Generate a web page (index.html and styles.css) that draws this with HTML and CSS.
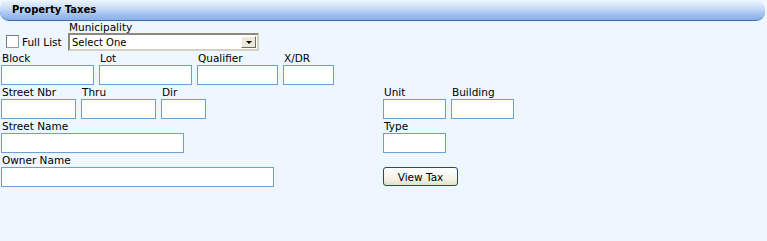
FILE: index.html
```html
<!DOCTYPE html>
<html lang="en">
<head>
  <meta charset="UTF-8" />
  <meta name="viewport" content="width=device-width, initial-scale=1.0">
  <title>Property Taxes</title>
  <link rel="stylesheet" href="styles.css">
</head>
<body>
  <div class="title-bar">Property Taxes</div>

  <form class="tax-form" onsubmit="return false;">
    <div class="row-top">
      <label class="full-list"><input type="checkbox" id="fullList" /> Full List</label>
      <div class="field">
        <span class="label label-short">Municipality</span>
        <div class="select-box">
          <select id="municipality">
            <option>Select One</option>
          </select>
          <span class="drop"><span class="arrow"></span></span>
        </div>
      </div>
    </div>

    <!-- block / lot -->
    <div class="fields">
      <div class="field"><span class="label">Block</span><input class="w93" id="block" /></div>
      <div class="field"><span class="label">Lot</span><input class="w93" id="lot" /></div>
      <div class="field"><span class="label">Qualifier</span><input class="w81" id="qualifier" /></div>
      <div class="field"><span class="label">X/DR</span><input class="w51" id="xdr" /></div>
    </div>
    <div></div>

    <!-- address -->
    <div class="fields">
      <div class="field"><span class="label">Street Nbr</span><input class="w75" id="streetNbr" /></div>
      <div class="field"><span class="label">Thru</span><input class="w75" id="thru" /></div>
      <div class="field"><span class="label">Dir</span><input class="w45" id="dir" /></div>
    </div>
    <div class="fields">
      <div class="field"><span class="label">Unit</span><input class="w63" id="unit" /></div>
      <div class="field"><span class="label">Building</span><input class="w63" id="building" /></div>
    </div>

    <div class="fields">
      <div class="field"><span class="label">Street Name</span><input class="w183" id="streetName" /></div>
    </div>
    <div class="fields">
      <div class="field"><span class="label">Type</span><input class="w63" id="type" /></div>
    </div>

    <div class="fields">
      <div class="field"><span class="label">Owner Name</span><input class="w273" id="ownerName" /></div>
    </div>
    <div class="fields">
      <button type="submit" class="view-tax">View Tax</button>
    </div>
  </form>
</body>
</html>
```

FILE: styles.css
```css
body {
  margin: 0;
  background-color: #eef6ff;
  color: #000;
  font-family: "DejaVu Sans", Verdana, sans-serif;
  font-size: 10.5px;
  height: 241px;
}
.title-bar {
  width: 753px;
  height: 20px;
  line-height: 20px;
  padding-left: 12px;
  font-size: 10px;
  font-weight: bold;
  border-bottom: 1px solid #3f6cab;
  border-radius: 9px;
  background: linear-gradient(#eef5fe, #c4daf7 45%, #9dbff0 75%, #8ab0e9);
}
.tax-form {
  display: grid;
  grid-template-columns: 382px auto;
  padding-left: 1px;
}
.row-top {
  grid-column: 1 / -1;
  display: flex;
  align-items: flex-end;
}
.full-list {
  width: 67px;
  display: flex;
  align-items: center;
  gap: 3px;
  margin-bottom: 3px;
}
.full-list input {
  appearance: none;
  width: 13px;
  height: 13px;
  margin: 0 0 0 5px;
  background-color: #fff;
  border: 1px solid #9a9a9a;
  border-top-color: #7a7a7a;
  border-left-color: #7a7a7a;
}
.fields {
  display: flex;
  gap: 5px;
}
.field {
  display: flex;
  flex-direction: column;
}
.label {
  line-height: 13px;
  padding: 1px 0 0 1px;
}
.label-short {
  line-height: 12px;
  padding-top: 0;
}
.field input {
  box-sizing: border-box;
  height: 20px;
  margin: 0;
  border: 1px solid #6d9fd5;
  background-color: #fff;
  font-family: inherit;
  font-size: 10px;
}
.w45 { width: 45px; }
.w51 { width: 51px; }
.w63 { width: 63px; }
.w75 { width: 75px; }
.w81 { width: 81px; }
.w93 { width: 93px; }
.w183 { width: 183px; }
.w273 { width: 273px; }

.select-box {
  box-sizing: border-box;
  width: 191px;
  height: 18px;
  display: flex;
  align-items: center;
  background-color: #fff;
  border: 2px solid #8d887a;
  border-right-color: #d4d0c4;
  border-bottom-color: #d4d0c4;
  padding-right: 1px;
}
.select-box select {
  appearance: none;
  flex: 1;
  border: none;
  outline: none;
  background: transparent;
  font-family: inherit;
  font-size: 10px;
  padding: 0 0 0 2px;
  margin: 0;
  color: #000;
}
.drop {
  box-sizing: border-box;
  width: 15px;
  height: 12px;
  display: flex;
  align-items: center;
  justify-content: center;
  background-color: #ece9d8;
  border: 1px solid #fff;
  border-right-color: #716f64;
  border-bottom-color: #716f64;
}
.arrow {
  width: 0;
  height: 0;
  border-left: 3px solid transparent;
  border-right: 3px solid transparent;
  border-top: 3px solid #000;
}
.view-tax {
  width: 75px;
  height: 19px;
  margin-top: 14px;
  padding: 0;
  font-family: inherit;
  font-size: 10.5px;
  color: #000;
  border: 1px solid #1f4a7c;
  border-radius: 3px;
  background: linear-gradient(#ffffff, #f5f3ea 60%, #e4e0cf);
  cursor: pointer;
}
```
